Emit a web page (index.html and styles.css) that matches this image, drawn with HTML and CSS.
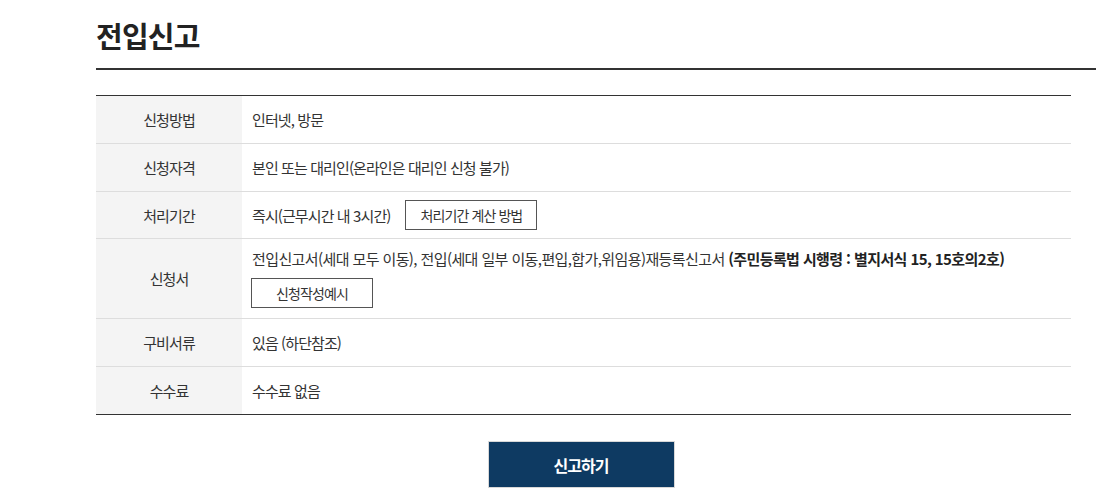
FILE: index.html
```html
<!DOCTYPE html>
<html lang="ko">
<head>
<meta charset="utf-8">
<title>전입신고</title>
<link rel="stylesheet" href="styles.css">
</head>
<body>
<div class="page">
  <h1 class="title">전입신고</h1>
  <table class="info">
    <tbody>
      <tr><th>신청방법</th><td>인터넷, 방문</td></tr>
      <tr><th>신청자격</th><td>본인 또는 대리인(온라인은 대리인 신청 불가)</td></tr>
      <tr class="row-short"><th>처리기간</th><td><span class="inline">즉시(근무시간 내 3시간)</span><button class="btn-line">처리기간 계산 방법</button></td></tr>
      <tr><th>신청서</th><td><p class="doc">전입신고서(세대 모두 이동), 전입(세대 일부 이동,편입,합가,위임용)재등록신고서 <strong>(주민등록법 시행령 : 별지서식 15, 15호의2호)</strong></p><button class="btn-line btn-example">신청작성예시</button></td></tr>
      <tr><th>구비서류</th><td>있음 (하단참조)</td></tr>
      <tr><th>수수료</th><td>수수료 없음</td></tr>
    </tbody>
  </table>
  <div class="actions"><button class="btn-submit">신고하기</button></div>
</div>
</body>
</html>
```
FILE: styles.css
```css
html, body {
  margin: 0;
  padding: 0;
  background: #fff;
}
body {
  font-family: "Noto Sans CJK KR", "Noto Sans", sans-serif;
  color: #333;
  overflow: hidden;
}
.page {
  padding-left: 96px;
}
.title {
  margin: 0;
  width: 1000px;
  padding-top: 14px;
  padding-bottom: 12px;
  font-size: 29px;
  line-height: 42px;
  font-weight: 700;
  letter-spacing: -0.8px;
  color: #222;
  border-bottom: 2px solid #333;
}
.info {
  margin-top: 25px;
  width: 975px;
  border-collapse: collapse;
  border-top: 1px solid #333;
  border-bottom: 1px solid #333;
  font-size: 15px;
  letter-spacing: -0.9px;
}
.info th, .info td {
  border-bottom: 1px solid #ddd;
  height: 48px;
  padding: 0 10px;
  line-height: 21px;
  box-sizing: border-box;
}
.info .row-short th, .info .row-short td {
  height: 47px;
}
.info tr:last-child th, .info tr:last-child td {
  border-bottom: none;
}
.info th {
  width: 146px;
  background: #f4f4f4;
  font-weight: 400;
  color: #333;
  text-align: center;
}
.info td {
  text-align: left;
  color: #333;
}
.inline {
  vertical-align: middle;
}
.btn-line {
  font-family: inherit;
  font-size: 14px;
  letter-spacing: -0.9px;
  color: #333;
  background: #fff;
  border: 1px solid #555;
  height: 30px;
  padding: 0 14px;
  margin-left: 15px;
  vertical-align: middle;
  cursor: pointer;
}
.doc {
  margin: 0;
  padding-top: 9px;
  letter-spacing: -0.6px;
}
.doc strong {
  font-weight: 700;
  color: #222;
  letter-spacing: -0.6px;
}
.btn-example {
  margin: 9px 0 10px -1px;
  width: 122px;
  display: block;
}
.actions {
  width: 970px;
  display: flex;
  justify-content: center;
  padding-top: 26px;
}
.btn-submit {
  width: 187px;
  height: 47px;
  background: #0e3a62;
  border: 1px solid #d8d8d8;
  color: #fff;
  font-family: inherit;
  font-size: 16px;
  font-weight: 700;
  letter-spacing: -1px;
  cursor: pointer;
}
```
